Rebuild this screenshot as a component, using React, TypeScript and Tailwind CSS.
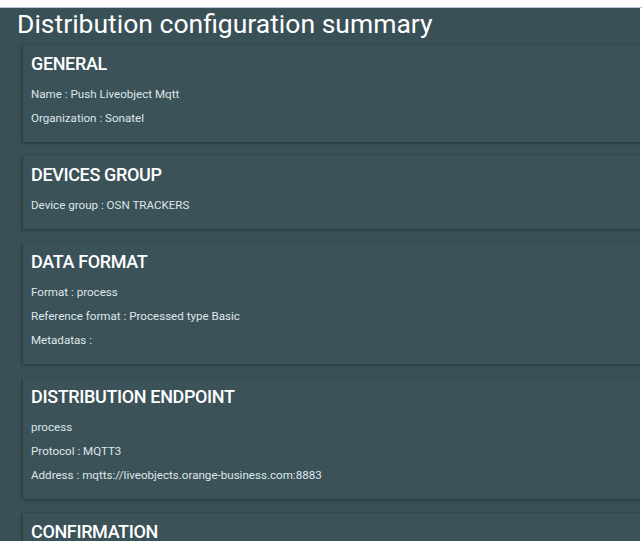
const sections: { title: string; rows: string[] }[] = [
  { title: "GENERAL", rows: ["Name : Push Liveobject Mqtt", "Organization : Sonatel"] },
  { title: "DEVICES GROUP", rows: ["Device group : OSN TRACKERS"] },
  {
    title: "DATA FORMAT",
    rows: ["Format : process", "Reference format : Processed type Basic", "Metadatas :"],
  },
  {
    title: "DISTRIBUTION ENDPOINT",
    rows: ["process", "Protocol : MQTT3", "Address : mqtts://liveobjects.orange-business.com:8883"],
  },
  { title: "CONFIRMATION", rows: [] },
];

function SummaryCard({ title, rows }: { title: string; rows: string[] }) {
  return (
    <div className="bg-[#3b5259] shadow-[-1px_1px_3px_rgba(0,0,0,0.35)] pl-2 pt-[9px] pb-3">
      <h2 className="text-[18px] leading-5 font-medium tracking-[-0.02em] text-white">{title}</h2>
      {rows.length > 0 && (
        <div className="mt-2">
          {rows.map((r) => (
            <p key={r} className="text-[11.6px] leading-6 text-[#dfe6e8]">
              {r}
            </p>
          ))}
        </div>
      )}
    </div>
  );
}

export default function App() {
  return (
    <div className="w-[642px] h-[553px] bg-white" style={{ fontFamily: "Roboto, 'Noto Sans', sans-serif" }}>
      <div className="h-[8px] border-b border-[#b5c4dc] bg-white" />
      <div className="w-[640px] h-[533px] overflow-hidden bg-[#3a5057]">
        <h1 className="pl-[17px] pt-[1px] text-[26.5px] leading-[30px] text-white">
          Distribution configuration summary
        </h1>
        <div className="flex flex-col gap-[14px] pl-[23px] mt-[6px] -mr-4">
          {sections.map((s) => (
            <SummaryCard key={s.title} title={s.title} rows={s.rows} />
          ))}
        </div>
      </div>
    </div>
  );
}
